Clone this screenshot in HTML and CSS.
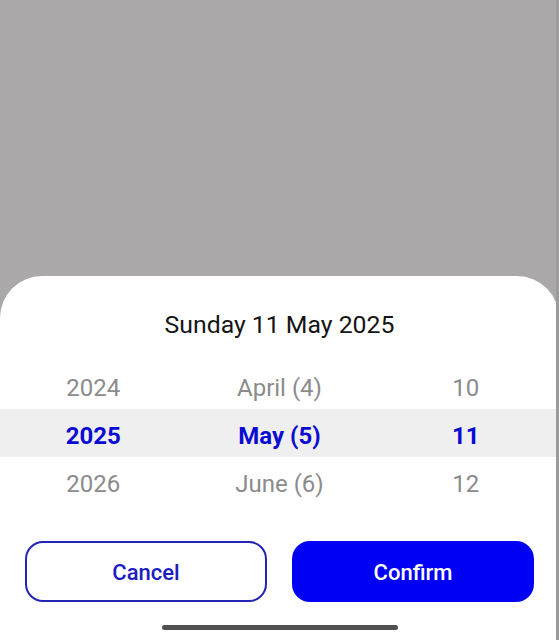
FILE: index.html
```html
<!DOCTYPE html>
<html>
<head>
<meta charset="utf-8">
<link rel="stylesheet" href="styles.css">
</head>
<body>
<div class="screen">
  <div class="backdrop"></div>
  <div class="sheet">
    <div class="title">Sunday 11 May 2025</div>
    <div class="picker">
      <div class="band"></div>
      <div class="col">
        <div class="item">2024</div>
        <div class="item selected">2025</div>
        <div class="item">2026</div>
      </div>
      <div class="col">
        <div class="item">April (4)</div>
        <div class="item selected">May (5)</div>
        <div class="item">June (6)</div>
      </div>
      <div class="col">
        <div class="item">10</div>
        <div class="item selected">11</div>
        <div class="item">12</div>
      </div>
    </div>
    <div class="actions">
      <button class="btn btn-cancel">Cancel</button>
      <button class="btn btn-confirm">Confirm</button>
    </div>
    <div class="home-bar"></div>
  </div>
  <div class="edge"></div>
</div>
</body>
</html>
```

FILE: styles.css
```css
* { box-sizing: border-box; }
html, body {
  margin: 0;
  padding: 0;
  width: 559px;
  height: 640px;
  overflow: hidden;
  background: #aaa8a9;
  font-family: Roboto, "Noto Sans", "Liberation Sans", sans-serif;
}
.screen {
  position: relative;
  width: 559px;
  height: 640px;
  display: flex;
  flex-direction: column;
}
.backdrop {
  height: 276px;
  flex: none;
}
.sheet {
  flex: 1;
  background: #ffffff;
  border-radius: 42px 42px 0 0;
  padding-top: 36px;
  display: flex;
  flex-direction: column;
}
.title {
  text-align: center;
  font-size: 24.8px;
  line-height: 26px;
  color: #151515;
}
.picker {
  position: relative;
  margin-top: 23px;
  display: grid;
  grid-template-columns: 1fr 1fr 1fr;
  height: 144px;
}
.band {
  position: absolute;
  left: 0;
  right: 0;
  top: 48px;
  height: 48px;
  background: #efefef;
}
.col {
  position: relative;
  display: flex;
  flex-direction: column;
  align-items: center;
}
.item {
  height: 48px;
  padding-top: 7px;
  line-height: 41px;
  font-size: 24px;
  color: #8b8b8b;
  white-space: nowrap;
}
.item.selected {
  color: #0b0bd2;
  font-weight: 700;
}
.actions {
  margin-top: 36px;
  padding: 0 25px;
  display: grid;
  grid-template-columns: 1fr 1fr;
  gap: 25px;
}
.btn {
  height: 61px;
  border-radius: 18px;
  font-family: Roboto, "Noto Sans", "Liberation Sans", sans-serif;
  font-size: 22px;
  font-weight: 500;
  display: flex;
  align-items: center;
  justify-content: center;
  padding: 2px 0 0;
  cursor: pointer;
}
.btn-cancel {
  background: #ffffff;
  border: 2px solid #2424b6;
  color: #1c1cc0;
}
.btn-confirm {
  background: #0000f4;
  border: none;
  color: #ffffff;
}
.home-bar {
  margin: 23px auto 0;
  width: 236px;
  height: 5px;
  border-radius: 3px;
  background: #505050;
}
.edge {
  position: absolute;
  top: 0;
  right: 0;
  width: 3px;
  height: 640px;
  background: #9c9a9b;
}
```
